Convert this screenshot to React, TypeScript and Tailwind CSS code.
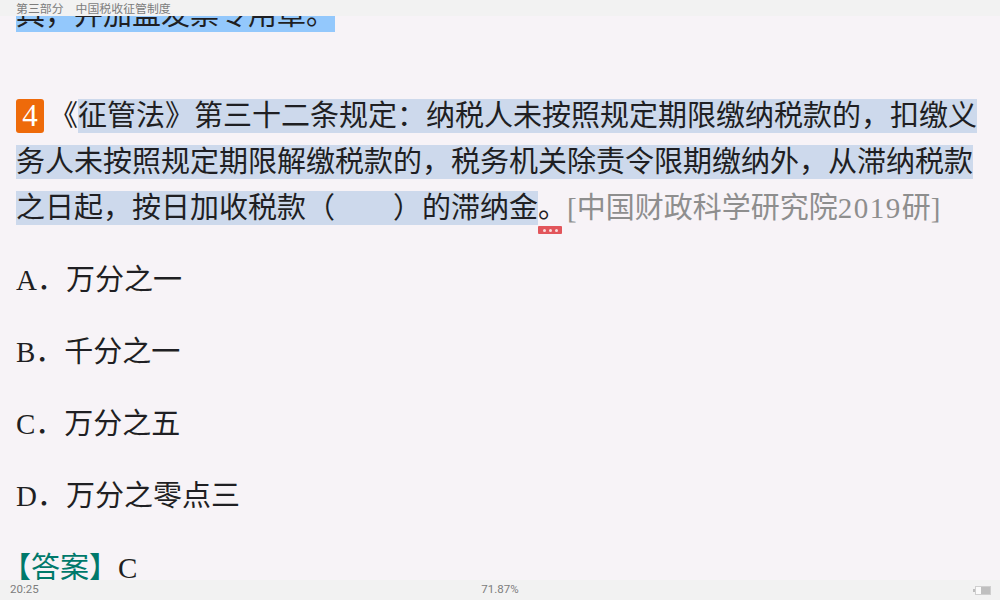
import React from 'react';

const font = '[font-family:"Liberation_Serif","Noto_Sans_CJK_SC",serif]';

const Highlight = ({ children, color = 'bg-[#cdd9ec]' }: { children: React.ReactNode; color?: string }) => (
  <span className={`inline-block h-[34px] leading-[34px] ${color}`}>{children}</span>
);

const options = ['A．万分之一', 'B．千分之一', 'C．万分之五', 'D．万分之零点三'];

const App: React.FC = () => {
  return (
    <div className="flex h-[600px] w-[1000px] flex-col overflow-hidden bg-[#f7f3f7] text-[#1f1f23]">
      <header className='flex h-4 shrink-0 items-center gap-[12px] bg-[#f2f2f2] pl-4 text-[11.9px] leading-4 text-[#7d7d7d] [font-family:"Noto_Sans_CJK_SC",sans-serif]'>
        <span>第三部分</span>
        <span>中国税收征管制度</span>
      </header>

      <main className={`relative min-h-0 flex-1 overflow-hidden px-4 text-[29px] leading-[46px] ${font}`}>
        <div className="-mt-[24px] flex flex-col">
          <div className="flex h-[46px] items-center whitespace-nowrap">
            <Highlight color="bg-[#93c8fc]">具，并加盖发票专用章。</Highlight>
          </div>

          <div className="mt-[55px] flex flex-col">
            <div className="flex h-[46px] items-center whitespace-nowrap">
              <span className="mr-[5px] flex h-[34px] w-7 items-center justify-center rounded-[3px] bg-[#ee6a0a] text-[31px] font-normal text-white">4</span>
              《<Highlight>征管法》第三十二条规定：纳税人未按照规定期限缴纳税款的，扣缴义</Highlight>
            </div>
            <div className="flex h-[46px] items-center whitespace-nowrap">
              <Highlight>务人未按照规定期限解缴税款的，税务机关除责令限期缴纳外，从滞纳税款</Highlight>
            </div>
            <div className="flex h-[46px] items-center whitespace-pre">
              <Highlight>之日起，按日加收税款（<span className="inline-block w-[58px]"></span>）的滞纳金</Highlight>
              <span>。</span>
              <span className="text-[#8e8e8e]">[中国财政科学研究院<span className="tracking-[1.5px]">2019</span>研]</span>
            </div>
          </div>

          <div className="mt-[26px] flex flex-col gap-[26px]">
            {options.map(o => (
              <div key={o} className="h-[46px] whitespace-nowrap">{o}</div>
            ))}
            <div className="h-[46px] whitespace-nowrap">
              <span className="-ml-[14px] text-[#00796b]">【答案】</span>C
            </div>
          </div>
        </div>

        {/* selection handle */}
        <div className="absolute left-[538px] top-[210px] flex h-2 w-6 items-center justify-center gap-[3px] rounded-[1px] bg-[#e2555b]">
          <span className="h-[3px] w-[3px] rounded-full bg-[#f8dcdc]" />
          <span className="h-[3px] w-[3px] rounded-full bg-[#f8dcdc]" />
          <span className="h-[3px] w-[3px] rounded-full bg-[#f8dcdc]" />
        </div>
      </main>

      <footer className='relative flex h-5 shrink-0 items-center justify-center bg-[#f2f2f2] text-[11.5px] text-[#7d7d7d] [font-family:Roboto,sans-serif]'>
        <span className="absolute left-[10px]">20:25</span>
        <span>71.87%</span>
        <svg className="absolute right-[9px] top-[6px]" width="18" height="9" viewBox="0 0 18 9">
          <rect x="0" y="3" width="2" height="3" fill="#bdbdbd" />
          <rect x="2.5" y="0.5" width="15" height="8" fill="#fafafa" stroke="#cfcfcf" />
          <rect x="8" y="1" width="9" height="7" fill="#bfbfbf" />
        </svg>
      </footer>
    </div>
  );
};

export default App;
